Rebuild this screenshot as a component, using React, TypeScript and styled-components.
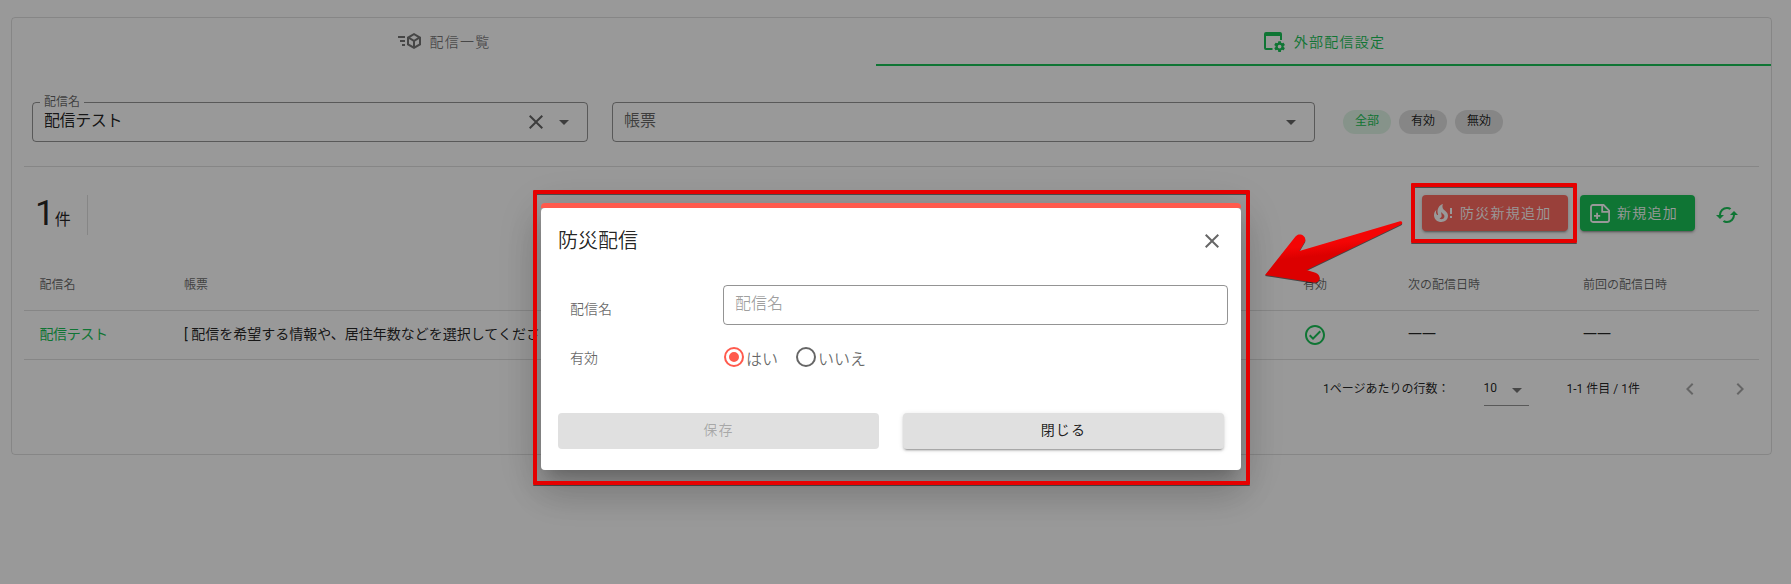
import React from "react";
import styled, { createGlobalStyle, css } from "styled-components";

const green = "#19c357";
const red = "#ff5a4d";
const ink = "rgba(0,0,0,.87)";
const soft = "rgba(0,0,0,.6)";
const line = "rgba(0,0,0,.12)";
const btnShadow =
  "0 3px 1px -2px rgba(0,0,0,.2), 0 2px 2px 0 rgba(0,0,0,.14), 0 1px 5px 0 rgba(0,0,0,.12)";

const Global = createGlobalStyle`
  *, *::before, *::after { box-sizing: border-box; }
  body {
    margin: 0;
    background: #fff;
    color: ${ink};
    font-family: Roboto, "Noto Sans CJK JP", sans-serif;
    font-size: 14px;
    font-weight: 400;
    overflow: hidden;
  }
  button, input { font: inherit; color: inherit; }
`;

/* ---------- icons ---------- */
const Svg = styled.svg<{ $size?: number }>`
  flex: none;
  display: block;
  width: ${(p) => p.$size ?? 24}px;
  height: ${(p) => p.$size ?? 24}px;
  fill: currentColor;
`;

const paths = {
  send: "M16,4L9,8.04V15.96L16,20L23,15.96V8.04M16,6.31L19.8,8.5L16,10.69L12.21,8.5M0,7V9H7V7M11,10.11L15,12.42V17.11L11,14.81M21,10.11V14.81L17,17.11V12.42M2,11V13H7V11M4,15V17H7V15",
  close:
    "M19,6.41L17.59,5L12,10.59L6.41,5L5,6.41L10.59,12L5,17.59L6.41,19L12,13.41L17.59,19L19,17.59L13.41,12L19,6.41Z",
  down: "M7,10L12,15L17,10H7Z",
  cached:
    "M19,8L15,12H18A6,6 0 0,1 12,18C11,18 10.03,17.75 9.2,17.3L7.74,18.76C8.97,19.54 10.43,20 12,20A8,8 0 0,0 20,12H23M6,12A6,6 0 0,1 12,6C13,6 13.97,6.25 14.8,6.7L16.26,5.24C15.03,4.46 13.57,4 12,4A8,8 0 0,0 4,12H1L5,16L9,12",
  check:
    "M12 2C6.5 2 2 6.5 2 12S6.5 22 12 22 22 17.5 22 12 17.5 2 12 2M12 20C7.59 20 4 16.41 4 12S7.59 4 12 4 20 7.59 20 12 16.41 20 12 20M16.59 7.58L10 14.17L7.41 11.59L6 13L10 17L18 9L16.59 7.58Z",
  left: "M15.41,16.58L10.83,12L15.41,7.41L14,6L8,12L14,18L15.41,16.58Z",
  right: "M8.59,16.58L13.17,12L8.59,7.41L10,6L16,12L10,18L8.59,16.58Z",
  radioOn:
    "M12,20A8,8 0 0,1 4,12A8,8 0 0,1 12,4A8,8 0 0,1 20,12A8,8 0 0,1 12,20M12,2A10,10 0 0,0 2,12A10,10 0 0,0 12,22A10,10 0 0,0 22,12A10,10 0 0,0 12,2M12,7A5,5 0 0,0 7,12A5,5 0 0,0 12,17A5,5 0 0,0 17,12A5,5 0 0,0 12,7Z",
  radioOff:
    "M12,20A8,8 0 0,1 4,12A8,8 0 0,1 12,4A8,8 0 0,1 20,12A8,8 0 0,1 12,20M12,2A10,10 0 0,0 2,12A10,10 0 0,0 12,22A10,10 0 0,0 22,12A10,10 0 0,0 12,2Z",
  fire: "M17.66 11.2C17.43 10.9 17.15 10.64 16.89 10.38C16.22 9.78 15.46 9.35 14.82 8.72C13.33 7.26 13 4.85 13.95 3C13 3.23 12.17 3.75 11.46 4.32C8.87 6.4 7.85 10.07 9.07 13.22C9.11 13.32 9.15 13.42 9.15 13.55C9.15 13.77 9 13.97 8.8 14.05C8.57 14.15 8.33 14.09 8.14 13.93C8.08 13.88 8.04 13.83 8 13.76C6.87 12.33 6.69 10.28 7.45 8.64C5.78 10 4.87 12.3 5 14.47C5.06 14.97 5.12 15.47 5.29 15.97C5.43 16.57 5.7 17.17 6 17.7C7.08 19.43 8.95 20.67 10.96 20.92C13.1 21.19 15.39 20.8 17.03 19.32C18.86 17.66 19.5 15 18.56 12.72L18.43 12.46C18.22 12 17.66 11.2 17.66 11.2M14.5 17.5C14.22 17.74 13.76 18 13.4 18.1C12.28 18.5 11.16 17.94 10.5 17.28C11.69 17 12.4 16.12 12.61 15.23C12.78 14.43 12.46 13.77 12.33 13C12.21 12.26 12.23 11.63 12.5 10.94C12.69 11.32 12.89 11.7 13.13 12C13.9 13 15.11 13.44 15.37 14.8C15.41 14.94 15.43 15.08 15.43 15.23C15.46 16.05 15.1 16.95 14.5 17.5Z",
};

const Icon = ({ name, size }: { name: keyof typeof paths; size?: number }) => (
  <Svg viewBox="0 0 24 24" $size={size}>
    <path d={paths[name]} />
  </Svg>
);

const FireAlertIcon = () => (
  <Svg viewBox="0 0 24 24">
    <path d={paths.fire} transform="translate(-3 0)" />
    <path d="M18 7H20V13H18zM18 15H20V17H18z" />
  </Svg>
);

const NotePlusIcon = () => (
  <Svg viewBox="0 0 24 24">
    <path
      d="M4.9 4H15.6L21.1 9.5V19.1A1.9 1.9 0 0 1 19.2 21H4.9A1.9 1.9 0 0 1 3 19.1V5.9A1.9 1.9 0 0 1 4.9 4Z"
      fill="none"
      stroke="currentColor"
      strokeWidth="1.8"
    />
    <path d="M14.2 4V10.8H21" fill="none" stroke="currentColor" strokeWidth="1.8" />
    <path d="M8.2 11.8H10V14H12.2V15.8H10V18H8.2V15.8H6V14H8.2z" />
  </Svg>
);

const WindowCogIcon = () => (
  <Svg viewBox="0 0 24 24">
    <path d="M4 3H18A2 2 0 0 1 20 5V11H18V7H4V19H10.5V21H4A2 2 0 0 1 2 19V5A2 2 0 0 1 4 3Z" />
    <path
      transform="translate(11.1 11.1) scale(.54)"
      d="M12,15.5A3.5,3.5 0 0,1 8.5,12A3.5,3.5 0 0,1 12,8.5A3.5,3.5 0 0,1 15.5,12A3.5,3.5 0 0,1 12,15.5M19.43,12.97C19.47,12.65 19.5,12.33 19.5,12C19.5,11.67 19.47,11.34 19.43,11L21.54,9.37C21.73,9.22 21.78,8.95 21.66,8.73L19.66,5.27C19.54,5.05 19.27,4.96 19.05,5.05L16.56,6.05C16.04,5.66 15.5,5.32 14.87,5.07L14.5,2.42C14.46,2.18 14.25,2 14,2H10C9.75,2 9.54,2.18 9.5,2.42L9.13,5.07C8.5,5.32 7.96,5.66 7.44,6.05L4.95,5.05C4.73,4.96 4.46,5.05 4.34,5.27L2.34,8.73C2.21,8.95 2.27,9.22 2.46,9.37L4.57,11C4.53,11.34 4.5,11.67 4.5,12C4.5,12.33 4.53,12.65 4.57,12.97L2.46,14.63C2.27,14.78 2.21,15.05 2.34,15.27L4.34,18.73C4.46,18.95 4.73,19.03 4.95,18.95L7.44,17.94C7.96,18.34 8.5,18.68 9.13,18.93L9.5,21.58C9.54,21.82 9.75,22 10,22H14C14.25,22 14.46,21.82 14.5,21.58L14.87,18.93C15.5,18.67 16.04,18.34 16.56,17.94L19.05,18.95C19.27,19.03 19.54,18.95 19.66,18.73L21.66,15.27C21.78,15.05 21.73,14.78 21.54,14.63L19.43,12.97Z"
    />
  </Svg>
);

/* ---------- page ---------- */
const Page = styled.div`
  width: 1791px;
  height: 584px;
  padding: 17px 19px 0 11px;
`;

const Card = styled.main`
  height: 438px;
  border: 1px solid ${line};
  border-radius: 4px;
`;

const Tabs = styled.nav`
  display: grid;
  grid-template-columns: 864px 1fr;
  height: 48px;
`;

const Tab = styled.div<{ $active?: boolean }>`
  display: flex;
  align-items: center;
  justify-content: center;
  gap: 8px;
  font-weight: 350;
  letter-spacing: 1.25px;
  color: ${(p) => (p.$active ? green : "rgba(0,0,0,.54)")};
  border-bottom: 2px solid ${(p) => (p.$active ? green : "transparent")};
  padding-bottom: 1px;
`;

const Filters = styled.section`
  display: flex;
  align-items: center;
  margin: 0 12px;
  padding: 12px 0 0 8px;
  height: 101px;
  border-bottom: 1px solid ${line};
`;

const Field = styled.fieldset<{ $w: number }>`
  position: relative;
  width: ${(p) => p.$w}px;
  height: 40px;
  margin: 0 24px 0 0;
  padding: 0 11px;
  border: 1px solid rgba(0, 0, 0, 0.42);
  border-radius: 4px;
  display: flex;
  align-items: center;
  font-size: 16px;
  color: ${soft};
`;

const FieldLabel = styled.span`
  position: absolute;
  left: 7px;
  top: -9px;
  padding: 0 4px;
  background: #fff;
  font-size: 12px;
  line-height: 16px;
`;

const FieldText = styled.span<{ $dark?: boolean }>`
  flex: 1;
  line-height: 24px;
  padding-bottom: 3px;
  letter-spacing: ${(p) => (p.$dark ? "-.4px" : "0")};
  color: ${(p) => (p.$dark ? ink : soft)};
`;

const FieldIcons = styled.span`
  display: flex;
  gap: 4px;
`;

const Chips = styled.div`
  display: flex;
  gap: 8px;
  margin-left: 4px;
`;

const Chip = styled.span<{ $on?: boolean }>`
  width: 48px;
  height: 24px;
  border-radius: 12px;
  text-align: center;
  font-size: 12px;
  line-height: 22px;
  background: ${(p) => (p.$on ? "#e0f5e6" : "#e0e0e0")};
  color: ${(p) => (p.$on ? green : ink)};
`;

const Toolbar = styled.section`
  display: flex;
  align-items: center;
  height: 40px;
  margin: 28px 20px 0 12px;
`;

const Count = styled.div`
  display: flex;
  align-items: baseline;
  height: 40px;
  width: 64px;
  padding-left: 11px;
  border-right: 1px solid ${line};
  line-height: 38px;
  font-size: 16px;
`;

const CountNumber = styled.span`
  font-size: 35px;
`;

const Actions = styled.div`
  display: flex;
  align-items: center;
  margin: 0 0 4px auto;
`;

const Button = styled.button<{ $tone: "danger" | "primary" }>`
  display: flex;
  align-items: center;
  height: 36px;
  border: 0;
  border-radius: 4px;
  font-weight: 350;
  letter-spacing: 1.25px;
  color: #fff;
  box-shadow: ${btnShadow};
  ${(p) =>
    p.$tone === "danger"
      ? css`
          width: 146px;
          gap: 4px;
          padding: 0 0 0 10px;
          margin-right: 12px;
          background: #ff6b62;
        `
      : css`
          width: 115px;
          gap: 5px;
          padding: 0 0 0 8px;
          background: ${green};
        `}
`;

const ButtonText = styled.span`
  padding-bottom: 3px;
`;

const Refresh = styled.span`
  color: ${green};
  margin: 4px 12px 0 20px;
`;

const Table = styled.section`
  margin: 25px 12px 0;
`;

const Row = styled.div<{ $head?: boolean }>`
  display: grid;
  grid-template-columns: 144.5px 1119px 105px 175px 1fr;
  align-items: center;
  padding: 0 16px 0 15.5px;
  height: ${(p) => (p.$head ? 51 : 49)}px;
  border-bottom: 1px solid ${line};
  font-size: ${(p) => (p.$head ? 12 : 14)}px;
  color: ${(p) => (p.$head ? soft : ink)};
  white-space: nowrap;
`;

const Cell = styled.span<{ $lift: number }>`
  padding-bottom: ${(p) => p.$lift}px;
`;

const Link = styled.a`
  padding-bottom: 5px;
  letter-spacing: -0.4px;
  color: ${green};
`;

const StatusIcon = styled.span`
  color: ${green};
`;

const Pager = styled.footer`
  display: flex;
  align-items: center;
  justify-content: flex-end;
  height: 58px;
  padding-right: 7px;
  font-size: 12px;
`;

const PagerText = styled.span`
  padding-bottom: 3px;
`;

const PageSize = styled.span`
  display: flex;
  align-items: center;
  justify-content: space-between;
  width: 45px;
  height: 32px;
  margin: 2px 38px 0 34px;
  border-bottom: 1px solid rgba(0, 0, 0, 0.42);
`;

const Muted = styled.span`
  color: rgba(0, 0, 0, 0.54);
`;

const Pale = styled.span<{ $ml: number }>`
  color: rgba(0, 0, 0, 0.34);
  margin-left: ${(p) => p.$ml}px;
`;

/* ---------- dialog ---------- */
const Overlay = styled.div`
  position: fixed;
  inset: 0;
  display: flex;
  justify-content: center;
  align-items: flex-start;
  padding: 203px 9px 0 0;
  background: rgba(0, 0, 0, 0.4);
`;

const Dialog = styled.div`
  width: 700px;
  height: 267px;
  border-radius: 4px;
  box-shadow: 0 11px 15px -7px rgba(0, 0, 0, 0.2), 0 24px 38px 3px rgba(0, 0, 0, 0.14),
    0 9px 46px 8px rgba(0, 0, 0, 0.12);
`;

const Accent = styled.div`
  height: 5px;
  border-radius: 4px 4px 0 0;
  background: ${red};
`;

const Sheet = styled.div`
  height: 262px;
  border-radius: 4px;
  background: #fff;
  padding: 21px 17px 0;
`;

const DialogHead = styled.header`
  display: flex;
  justify-content: space-between;
  align-items: center;
  height: 24px;
  font-size: 20px;
  color: ${soft};
`;

const Title = styled.h1`
  margin: 0;
  font-size: 20px;
  font-weight: 350;
  line-height: 24px;
  color: ${ink};
`;

const FormRow = styled.div<{ $top: number }>`
  display: grid;
  grid-template-columns: 153px 505px;
  align-items: center;
  height: 40px;
  margin: ${(p) => p.$top}px 0 0 12px;
  font-weight: 350;
  color: ${soft};
`;

const FormLabel = styled.span<{ $drop?: number }>`
  padding-top: ${(p) => p.$drop ?? 0}px;
`;

const TextInput = styled.input`
  width: 505px;
  height: 40px;
  padding: 0 11px 3px;
  border: 1px solid rgba(0, 0, 0, 0.42);
  border-radius: 4px;
  background: none;
  font-size: 16px;
  outline: 0;
  &::placeholder {
    color: rgba(0, 0, 0, 0.38);
    opacity: 1;
  }
`;

const Radios = styled.div`
  display: flex;
  gap: 16px;
  margin-left: -1px;
  font-size: 16px;
`;

const Radio = styled.label<{ $on?: boolean }>`
  display: flex;
  align-items: center;
  svg {
    color: ${(p) => (p.$on ? red : soft)};
  }
`;

const RadioText = styled.span`
  line-height: 24px;
  margin: 4px 0 -2px;
`;

const DialogFoot = styled.footer`
  display: flex;
  gap: 24px;
  margin-top: 36px;
`;

const WideButton = styled.button`
  width: 321px;
  height: 36px;
  padding: 0 0 4px;
  border: 0;
  border-radius: 4px;
  background: #e0e0e0;
  letter-spacing: 1.25px;
  color: ${ink};
  box-shadow: ${btnShadow};
  &:disabled {
    color: rgba(0, 0, 0, 0.26);
    box-shadow: none;
  }
`;

/* ---------- annotations floating over the page ---------- */
const Frame = styled.div<{ $x: number; $y: number; $w: number; $h: number }>`
  position: fixed;
  left: ${(p) => p.$x}px;
  top: ${(p) => p.$y}px;
  width: ${(p) => p.$w}px;
  height: ${(p) => p.$h}px;
  border: 4px solid #e60000;
  border-radius: 1px;
  box-shadow: 0 1px 0 rgba(0, 0, 0, 0.5), inset 0 1px 0 rgba(0, 0, 0, 0.5);
`;

const Arrow = styled.svg`
  position: fixed;
  left: 1260px;
  top: 215px;
  filter: drop-shadow(0 1px 0.5px rgba(0, 0, 0, 0.55));
`;

export default function App() {
  return (
    <>
      <Global />
      <Page>
        <Card>
          <Tabs>
            <Tab>
              <Icon name="send" />
              配信一覧
            </Tab>
            <Tab $active>
              <WindowCogIcon />
              外部配信設定
            </Tab>
          </Tabs>
          <Filters>
            <Field $w={556}>
              <FieldLabel>配信名</FieldLabel>
              <FieldText $dark>配信テスト</FieldText>
              <FieldIcons>
                <Icon name="close" />
                <Icon name="down" />
              </FieldIcons>
            </Field>
            <Field $w={703}>
              <FieldText>帳票</FieldText>
              <FieldIcons>
                <Icon name="down" />
              </FieldIcons>
            </Field>
            <Chips>
              <Chip $on>全部</Chip>
              <Chip>有効</Chip>
              <Chip>無効</Chip>
            </Chips>
          </Filters>
          <Toolbar>
            <Count>
              <CountNumber>1</CountNumber>件
            </Count>
            <Actions>
              <Button $tone="danger">
                <FireAlertIcon />
                <ButtonText>防災新規追加</ButtonText>
              </Button>
              <Button $tone="primary">
                <NotePlusIcon />
                <ButtonText>新規追加</ButtonText>
              </Button>
              <Refresh>
                <Icon name="cached" />
              </Refresh>
            </Actions>
          </Toolbar>
          <Table>
            <Row $head>
              <Cell $lift={3}>配信名</Cell>
              <Cell $lift={3}>帳票</Cell>
              <Cell $lift={3}>有効</Cell>
              <Cell $lift={3}>次の配信日時</Cell>
              <Cell $lift={3}>前回の配信日時</Cell>
            </Row>
            <Row>
              <Link>配信テスト</Link>
              <Cell $lift={5}>[ 配信を希望する情報や、居住年数などを選択してください ]</Cell>
              <StatusIcon>
                <Icon name="check" />
              </StatusIcon>
              <Cell $lift={5}>一一</Cell>
              <Cell $lift={5}>一一</Cell>
            </Row>
            <Pager>
              <PagerText>1ページあたりの行数：</PagerText>
              <PageSize>
                <PagerText>10</PagerText>
                <Muted>
                  <Icon name="down" />
                </Muted>
              </PageSize>
              <PagerText>1-1 件目 / 1件</PagerText>
              <Pale $ml={38}>
                <Icon name="left" />
              </Pale>
              <Pale $ml={26}>
                <Icon name="right" />
              </Pale>
            </Pager>
          </Table>
        </Card>
      </Page>
      <Overlay>
        <Dialog>
          <Accent />
          <Sheet>
            <DialogHead>
              <Title>防災配信</Title>
              <Icon name="close" />
            </DialogHead>
            <FormRow $top={32}>
              <FormLabel $drop={5}>配信名</FormLabel>
              <TextInput placeholder="配信名" />
            </FormRow>
            <FormRow $top={12}>
              <FormLabel>有効</FormLabel>
              <Radios>
                <Radio $on>
                  <Icon name="radioOn" />
                  <RadioText>はい</RadioText>
                </Radio>
                <Radio>
                  <Icon name="radioOff" />
                  <RadioText>いいえ</RadioText>
                </Radio>
              </Radios>
            </FormRow>
            <DialogFoot>
              <WideButton disabled>保存</WideButton>
              <WideButton>閉じる</WideButton>
            </DialogFoot>
          </Sheet>
        </Dialog>
      </Overlay>
      <Frame $x={533} $y={190} $w={717} $h={295} />
      <Frame $x={1411} $y={183} $w={166} $h={60} />
      <Arrow width="150" height="75" viewBox="1260 215 150 75">
        <defs>
          <linearGradient id="arrowFill" x1="0" y1="0" x2="0.25" y2="1">
            <stop offset="0.45" stopColor="#f40505" />
            <stop offset="0.62" stopColor="#dc0000" />
          </linearGradient>
        </defs>
        <path
          d="M1265 275L1295.5 236.5C1299 232 1307 235.5 1305 241.5L1299.4 251L1400 221.3C1402.5 221 1403 223.5 1401 224.5L1306.6 270L1315.5 272.8C1322 275 1320.5 283.5 1313.5 282.5Z"
          fill="url(#arrowFill)"
        />
      </Arrow>
    </>
  );
}
